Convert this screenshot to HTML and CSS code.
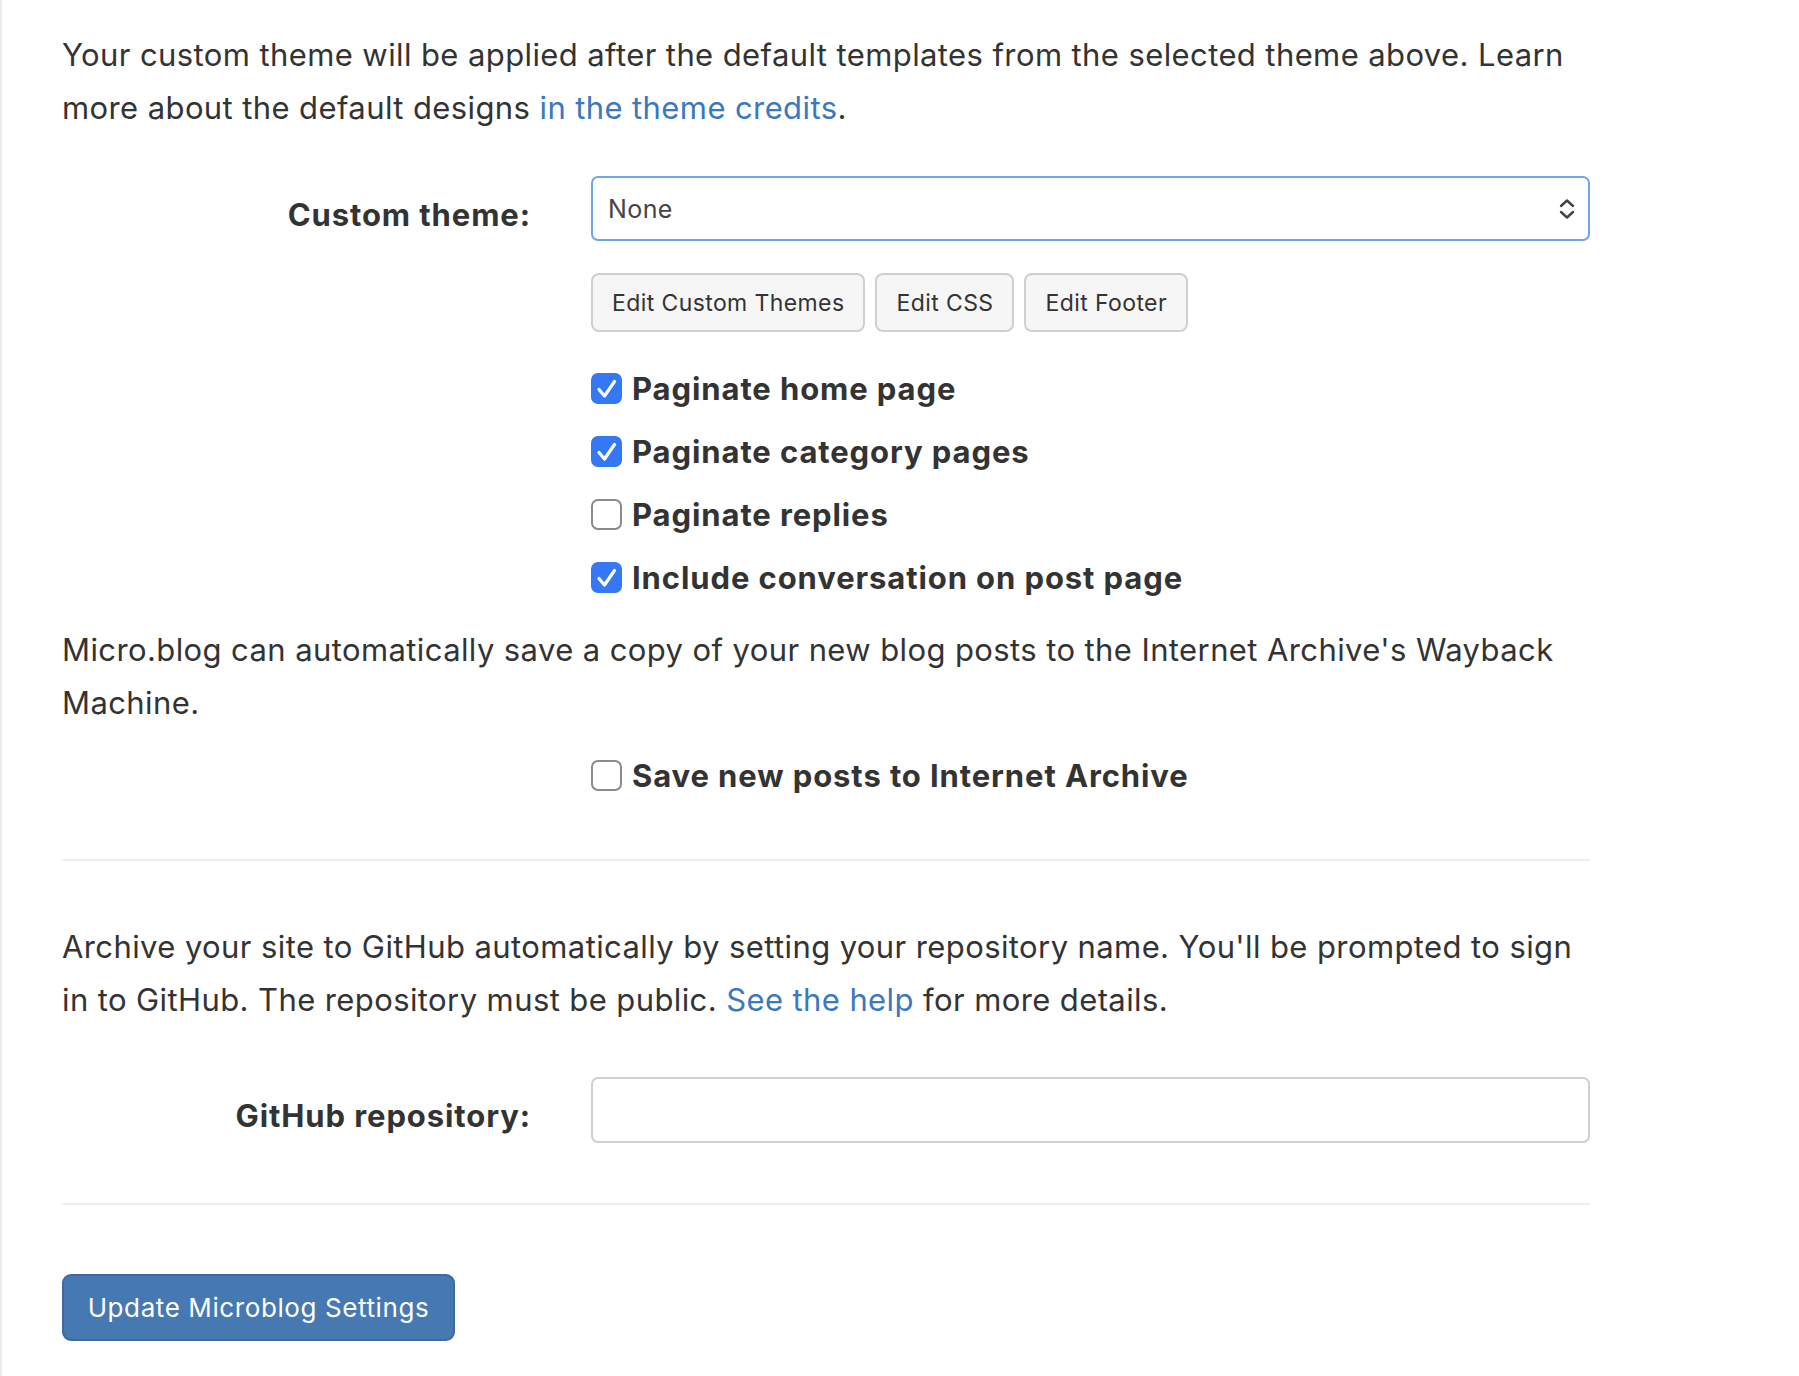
FILE: index.html
```html
<!DOCTYPE html>
<html>
<head>
<meta charset="utf-8">
<link rel="stylesheet" href="styles.css">
</head>
<body>
<div class="page">
  <p class="intro">Your custom theme will be applied after the default templates from the selected theme above. Learn more about the default designs <a href="#">in the theme credits</a>.</p>

  <div class="row row-theme">
    <label class="row-label">Custom theme:</label>
    <div class="row-field">
      <div class="select">
        <span>None</span>
        <svg class="chev" width="18" height="22" viewBox="0 0 18 22"><path d="M3 8 L9 2.5 L15 8" fill="none" stroke="#444" stroke-width="2.4" stroke-linecap="round" stroke-linejoin="round"/><path d="M3 14 L9 19.5 L15 14" fill="none" stroke="#444" stroke-width="2.4" stroke-linecap="round" stroke-linejoin="round"/></svg>
      </div>
      <div class="btns">
        <button class="btn">Edit Custom Themes</button>
        <button class="btn">Edit CSS</button>
        <button class="btn">Edit Footer</button>
      </div>
      <div class="checks">
        <div class="check"><span class="box on"><svg width="24" height="22" viewBox="0 0 24 22"><path d="M4 11.5 L9.5 18 L19.5 3.5" fill="none" stroke="#fff" stroke-width="3.2" stroke-linecap="round" stroke-linejoin="round"/></svg></span><span class="check-text">Paginate home page</span></div>
        <div class="check"><span class="box on"><svg width="24" height="22" viewBox="0 0 24 22"><path d="M4 11.5 L9.5 18 L19.5 3.5" fill="none" stroke="#fff" stroke-width="3.2" stroke-linecap="round" stroke-linejoin="round"/></svg></span><span class="check-text">Paginate category pages</span></div>
        <div class="check"><span class="box"></span><span class="check-text">Paginate replies</span></div>
        <div class="check"><span class="box on"><svg width="24" height="22" viewBox="0 0 24 22"><path d="M4 11.5 L9.5 18 L19.5 3.5" fill="none" stroke="#fff" stroke-width="3.2" stroke-linecap="round" stroke-linejoin="round"/></svg></span><span class="check-text">Include conversation on post page</span></div>
      </div>
    </div>
  </div>

  <p class="para para-archive">Micro.blog can automatically save a copy of your new blog posts to the Internet Archive's Wayback Machine.</p>

  <div class="row row-archive">
    <div></div>
    <div class="row-field">
      <div class="check"><span class="box"></span><span class="check-text">Save new posts to Internet Archive</span></div>
    </div>
  </div>

  <hr class="sep sep-1">

  <p class="para para-github">Archive your site to GitHub automatically by setting your repository name. You'll be prompted to sign in to GitHub. The repository must be public. <a href="#">See the help</a> for more details.</p>

  <div class="row row-github">
    <label class="row-label">GitHub repository:</label>
    <div class="row-field">
      <div class="input"></div>
    </div>
  </div>

  <hr class="sep sep-2">

  <button class="primary">Update Microblog Settings</button>
</div>
</body>
</html>
```

FILE: styles.css
```css
html, body {
  margin: 0;
  padding: 0;
  background: #fff;
}
body {
  font-family: Inter, "Noto Sans", sans-serif;
  color: #333;
  border-left: 2px solid #ececec;
  min-height: 1376px;
  box-sizing: border-box;
}
.page {
  padding: 28px 0 0 60px;
  width: 1528px;
}
.intro, .para {
  margin: 0;
  font-size: 31px;
  line-height: 53px;
  letter-spacing: 0.4px;
}
a {
  color: #3a78c0;
  text-decoration: none;
}
.row {
  display: grid;
  grid-template-columns: 469px 1fr;
  column-gap: 60px;
}
.row-label {
  text-align: right;
  font-weight: 700;
  font-size: 31px;
  color: #333;
  height: 65px;
  display: flex;
  align-items: center;
  justify-content: flex-end;
  letter-spacing: 0.9px;
  padding-top: 12px;
  box-sizing: border-box;
}
.row-theme {
  margin-top: 42px;
}
.select {
  height: 65px;
  box-sizing: border-box;
  border: 2px solid #6ea6e6;
  border-radius: 7px;
  display: flex;
  align-items: center;
  justify-content: space-between;
  padding: 0 12px 0 15px;
  font-size: 25px;
  letter-spacing: 0.4px;
  color: #444;
}
.chev {
  display: block;
}
.btns {
  display: flex;
  gap: 10px;
  margin-top: 32px;
}
.btn {
  font-family: Inter, "Noto Sans", sans-serif;
  font-size: 23px;
  color: #333;
  background: #f6f6f6;
  border: 2px solid #cfcfcf;
  border-radius: 8px;
  height: 59px;
  padding: 0 19px;
  letter-spacing: 0.4px;
}
.checks {
  margin-top: 41px;
  display: flex;
  flex-direction: column;
  gap: 32px;
}
.check {
  display: flex;
  align-items: center;
  gap: 10px;
  height: 31px;
}
.box {
  width: 31px;
  height: 31px;
  box-sizing: border-box;
  border: 2.5px solid #8a8a8a;
  border-radius: 7px;
  display: flex;
  align-items: center;
  justify-content: center;
  background: #fff;
  flex: none;
}
.box.on {
  background: #3478f6;
  border-color: #3478f6;
}
.check-text {
  font-weight: 700;
  font-size: 31px;
  color: #333;
  letter-spacing: 0.9px;
}
.para-archive {
  margin-top: 30px;
}
.row-archive {
  margin-top: 31px;
}
.sep {
  border: 0;
  height: 2px;
  background: #efefef;
  margin: 0;
}
.sep-1 {
  margin-top: 68px;
}
.para-github {
  margin-top: 59px;
}
.row-github {
  margin-top: 51px;
}
.input {
  height: 66px;
  box-sizing: border-box;
  border: 2px solid #cfcfcf;
  border-radius: 7px;
}
.sep-2 {
  margin-top: 60px;
}
.primary {
  margin-top: 69px;
  font-family: Inter, "Noto Sans", sans-serif;
  font-size: 26px;
  letter-spacing: 0.6px;
  color: #fff;
  background: #4678b2;
  border: 2px solid #3c6aa2;
  border-radius: 9px;
  height: 67px;
  width: 393px;
  padding: 0;
}
```
